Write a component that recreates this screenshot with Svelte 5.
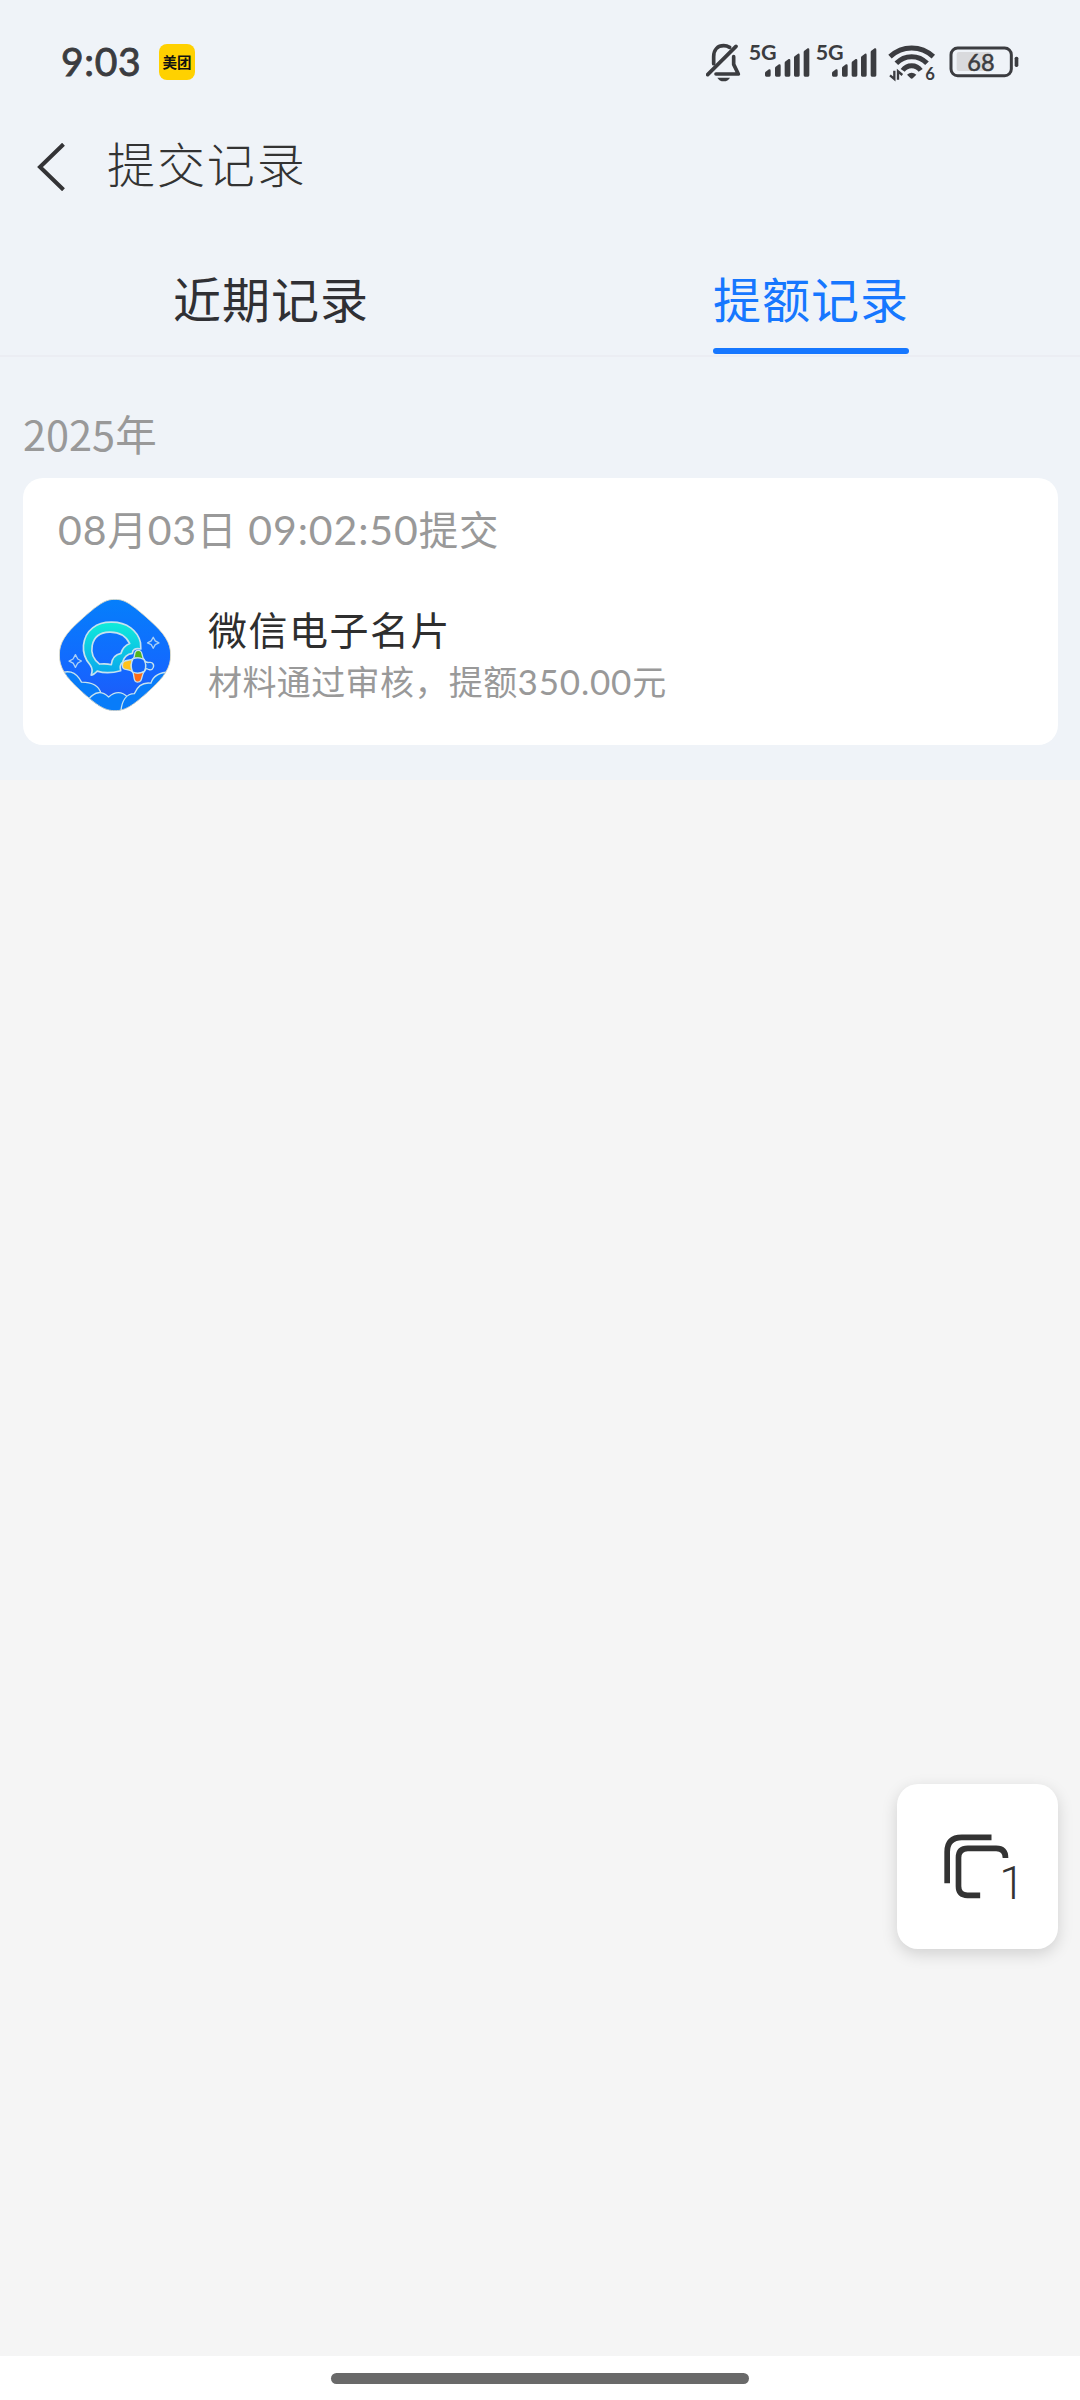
<script>
  const tabs = [
    { label: '近期记录', active: false },
    { label: '提额记录', active: true }
  ];
  const bars = [
    { x: 226, y: 122 },
    { x: 256, y: 107 },
    { x: 285, y: 91 },
    { x: 313, y: 75 },
    { x: 342, y: 59 }
  ];
</script>

{#snippet signal()}
  <svg class="signal" viewBox="174 0 186 195">
    <text x="176" y="89" font-size="60" font-weight="700" textLength="84" lengthAdjust="spacingAndGlyphs">5G</text>
    {#each bars as b}
      <path
        d="M{b.x + 3} {b.y + 2}L{b.x + 11} {b.y - 4}Q{b.x + 16} {b.y - 5} {b.x + 16} {b.y}V136Q{b.x + 16} 140 {b.x + 12} 140H{b.x + 3}Q{b.x - 1} 140 {b.x - 1} 136V{b.y + 7}Q{b.x - 1} {b.y + 4} {b.x + 3} {b.y + 2}Z"
      />
    {/each}
  </svg>
{/snippet}

<div class="screen">
  <section class="top">
    <div class="status">
      <span class="time">9:03</span>
      <span class="app-badge">美团</span>
      <div class="indicators">
        <svg class="bell" viewBox="48 0 105 195">
          <g fill="none" stroke="#3b3c40" stroke-width="11" stroke-linejoin="round" stroke-linecap="round">
            <path d="M71 101V80C71 58 84 47 101 47C108 47 114 49 119 52" />
            <path d="M131 80V103L145 132H78" />
            <path d="M53 134L138 49" />
          </g>
          <path d="M82 143H120Q114 154 101 154Q88 154 82 143Z" />
        </svg>
        {@render signal()}
        {@render signal()}
        <svg class="wifi" viewBox="54 0 144 195">
          <g fill="none" stroke="#3b3c40" stroke-width="15">
            <path d="M60 80Q88 54 125 54Q162 54 190 80" />
            <path d="M79 100Q98 80 125 80Q152 80 171 100" />
            <path d="M98 121Q108 107 125 107Q142 107 152 121" />
          </g>
          <path d="M111 134Q125 123 139 134L129 144Q125 148 121 144Z" />
          <path d="M73 122V147L60 136M84 149V124L97 135" fill="none" stroke="#3b3c40" stroke-width="7" />
          <text x="166" y="150" font-size="50" font-weight="700" textLength="29" lengthAdjust="spacingAndGlyphs">6</text>
        </svg>
        <svg class="battery" viewBox="238 0 210 195">
          <rect x="261" y="66" width="104" height="57" rx="6" fill="#d9dadd" />
          <rect x="244" y="54" width="181" height="83" rx="20" fill="none" stroke="#3b3c40" stroke-width="9" />
          <rect x="435" y="80" width="11" height="31" rx="5" />
          <text class="level" x="293" y="122" font-size="70" textLength="82" lengthAdjust="spacingAndGlyphs">68</text>
        </svg>
      </div>
    </div>

    <header class="nav">
      <svg class="back" viewBox="0 0 28 48">
        <path d="M26.5 1.2L3 24L26.5 46.8" fill="none" stroke="#333336" stroke-width="4" />
      </svg>
      <h1>提交记录</h1>
    </header>

    <nav class="tabs">
      {#each tabs as tab}
        <div class="tab"><span class:active={tab.active}>{tab.label}</span></div>
      {/each}
    </nav>

    <h2 class="year">2025年</h2>

    <article class="card">
      <p class="date"><span class="digits">08</span>月<span class="digits">03</span>日 <span class="digits">09:02:50</span>提交</p>
      <div class="record">
        <svg class="record-icon" viewBox="28 28 334 334">
          <defs>
            <linearGradient id="sky" x1="0" y1="0" x2="0" y2="1">
              <stop offset="0" stop-color="#057ffb" />
              <stop offset=".65" stop-color="#1467ff" />
              <stop offset="1" stop-color="#2058f5" />
            </linearGradient>
            <linearGradient id="ring" x1="0" y1="0" x2="0" y2="1">
              <stop offset="0" stop-color="#10ecd9" />
              <stop offset="1" stop-color="#08a6ee" />
            </linearGradient>
            <clipPath id="tile">
              <path d="M195 29C224 29 244 43 298 91C342 130 361 158 361 195C361 232 343 260 299 300C246 348 225 361 195 361C165 361 144 348 91 300C47 260 29 232 29 195C29 158 48 130 92 91C146 43 166 29 195 29Z" />
            </clipPath>
          </defs>
          <g clip-path="url(#tile)">
            <rect x="28" y="28" width="334" height="334" fill="url(#sky)" />
            <g fill="#087cf9" stroke="#c5e2ef" stroke-width="4">
              <path d="M20 255Q70 227 95 276Q145 276 153 310V370H20Z" />
              <path d="M117 326Q145 292 176 320Q207 294 233 321Q222 340 212 370H117Z" />
              <path d="M212 370C214 330 230 310 253 310C263 285 280 276 302 279C310 254 330 243 370 246V370Z" />
            </g>
            <path
              fill="url(#ring)"
              fill-rule="evenodd"
              stroke="#c5e2ef"
              stroke-width="5"
              stroke-linejoin="round"
              d="M124 255C128 245 128 235 121 225C106 208 99 188 101 166C106 119 142 97 183 97C231 96 263 123 271 158L272 177C253 174 247 180 247 190C232 192 222 199 218 216C211 222 209 231 212 242C187 249 163 250 142 243Q130 255 124 255ZM149 222C129 207 123 188 127 167C132 141 151 128 178 127C207 126 228 139 239 161C222 168 216 179 213 190C196 193 186 204 184 224C170 220 160 221 149 222Z"
            />
            <g stroke="#c5e2ef" stroke-width="4" stroke-linejoin="round">
              <path fill="#52b51c" d="M249 206C258 198 248 181 264 181C280 181 272 196 281 208Q264 200 249 206Z" />
              <path fill="#ffc21b" d="M249 206C237 214 217 207 217 226C217 244 236 234 247 245Q239 224 249 206Z" />
              <path fill="#ff6b16" d="M247 245C255 252 246 276 262 276C279 276 272 256 283 243Q264 254 247 245Z" />
              <path fill="#1673fa" d="M281 208C289 225 297 213 305 218C315 225 309 241 298 239C289 238 291 230 283 243Q291 226 281 208Z" />
              <path fill="#1467fa" d="M249 206Q264 200 281 208Q291 226 283 243Q264 254 247 245Q239 224 249 206Z" />
            </g>
            <g fill="none" stroke="#a9cff5" stroke-width="4" stroke-linejoin="round">
              <path d="M77 194L84 207L95 213L84 219L77 232L70 219L58 213L70 207Z" />
              <path d="M309 142L315 153L326 159L315 164L309 175L303 164L292 159L303 153Z" />
            </g>
          </g>
          <path d="M195 29C224 29 244 43 298 91C342 130 361 158 361 195C361 232 343 260 299 300C246 348 225 361 195 361C165 361 144 348 91 300C47 260 29 232 29 195C29 158 48 130 92 91C146 43 166 29 195 29Z" fill="none" stroke="#e5dfc4" stroke-width="2.5" />
        </svg>
        <div class="info">
          <h3>微信电子名片</h3>
          <p>材料通过审核，提额<span class="amount">350.00</span>元</p>
        </div>
      </div>
    </article>
  </section>

  <button class="pages" aria-label="1">
    <svg viewBox="81 72 482 495">
      <g fill="none" stroke="#333" stroke-width="17">
        <path d="M231 370V276Q231 232 275 232H364" />
        <path d="M330 406H292Q265 406 265 379V293Q265 265 293 265H378Q406 265 406 294" />
      </g>
      <text x="387" y="417" font-size="137" font-weight="300">1</text>
    </svg>
  </button>

  <footer><span class="home"></span></footer>
</div>

<style>
  :global(body) { margin: 0; }
  .screen {
    position: relative;
    width: 1080px;
    height: 2400px;
    display: flex;
    flex-direction: column;
    justify-content: space-between;
    background: #f5f5f5;
    font-family: Lato, 'Noto Sans CJK SC', sans-serif;
    color: #333;
  }
  h1, h2, h3, p { margin: 0; font-weight: 400; }
  svg { display: block; flex: none; fill: #3b3c40; }
  .top {
    box-sizing: border-box;
    height: 780px;
    background: #eff3f8;
    display: flex;
    flex-direction: column;
  }
  .status {
    box-sizing: border-box;
    height: 124px;
    padding: 0 61.5px 0 61px;
    display: flex;
    align-items: center;
  }
  .time {
    width: 98px;
    padding-bottom: 2px;
    font-size: 39px;
    font-weight: 400;
    line-height: 46px;
    letter-spacing: .7px;
    color: #3b3c40;
    -webkit-text-stroke: .9px #3b3c40;
  }
  .app-badge {
    width: 36px;
    height: 36px;
    border-radius: 8px;
    background: #ffd100;
    color: #111;
    font: 700 14.5px/35px 'Noto Sans CJK SC', sans-serif;
    text-align: center;
    white-space: nowrap;
  }
  .indicators { margin-left: auto; display: flex; height: 65px; }
  .bell { width: 35px; height: 65px; margin-right: 7px; }
  .signal { width: 62px; height: 65px; margin-right: 5px; }
  .wifi { width: 48px; height: 65px; margin: 0 13px 0 6px; }
  .battery { width: 70px; height: 65px; }
  .level { stroke: #3b3c40; stroke-width: 1.5px; }
  .nav {
    height: 86px;
    padding-left: 37px;
    display: flex;
    align-items: center;
  }
  .back { width: 28px; height: 48px; margin-right: 42px; }
  h1 {
    padding-bottom: 4px;
    font-size: 48px;
    font-weight: 300;
    line-height: 70px;
    letter-spacing: 1.9px;
  }
  .tabs {
    box-sizing: border-box;
    height: 147px;
    display: grid;
    grid-template-columns: 1fr 1fr;
    border-bottom: 2px solid #ebedf3;
  }
  .tab { display: flex; justify-content: center; align-items: flex-end; }
  .tab span {
    position: relative;
    box-sizing: border-box;
    width: 196px;
    height: 89px;
    margin: 0 0 1px 2px;
    font-size: 48px;
    line-height: 70px;
    letter-spacing: 1px;
    white-space: nowrap;
    color: #303034;
  }
  .tab .active { color: #1677ff; }
  .tab .active::after {
    content: '';
    position: absolute;
    left: 0;
    right: 0;
    bottom: 0;
    height: 6px;
    border-radius: 3px;
    background: #1677ff;
  }
  .year {
    height: 121px;
    padding: 42px 0 0 23px;
    box-sizing: border-box;
    font: 400 41.5px/68px 'Noto Sans CJK SC', sans-serif;
    color: #999;
  }
  .card {
    box-sizing: border-box;
    height: 267px;
    margin: 0 22px 0 23px;
    padding: 22px 35px 0;
    border-radius: 20px;
    background: #fff;
  }
  .date {
    height: 60px;
    font-size: 39.5px;
    line-height: 60px;
    letter-spacing: .8px;
    white-space: nowrap;
    color: #999;
  }
  .digits { font-size: 41px; letter-spacing: .9px; }
  .record { display: flex; margin-top: 39px; }
  .record-icon { width: 112px; height: 112px; margin: 0 37px 0 1px; }
  .info { padding-top: 3px; }
  h3 { font-size: 39px; line-height: 56px; letter-spacing: 1.5px; color: #2e2e2e; }
  .info p { height: 48px; font-size: 34px; line-height: 47px; letter-spacing: .4px; color: #999; }
  .amount { font-size: 35px; letter-spacing: .8px; }
  .pages {
    position: absolute;
    left: 897px;
    top: 1784px;
    width: 161px;
    height: 165px;
    padding: 0;
    border: 0;
    border-radius: 21px;
    background: #fff;
    box-shadow: 0 5px 16px rgba(0, 0, 0, .15);
  }
  .pages svg { width: 161px; height: 165px; fill: #333; font-family: Roboto, sans-serif; }
  footer {
    height: 44px;
    background: #fff;
    display: flex;
    justify-content: center;
    align-items: flex-start;
  }
  .home {
    width: 418px;
    height: 11px;
    margin-top: 17px;
    border-radius: 6px;
    background: #696969;
  }
</style>
